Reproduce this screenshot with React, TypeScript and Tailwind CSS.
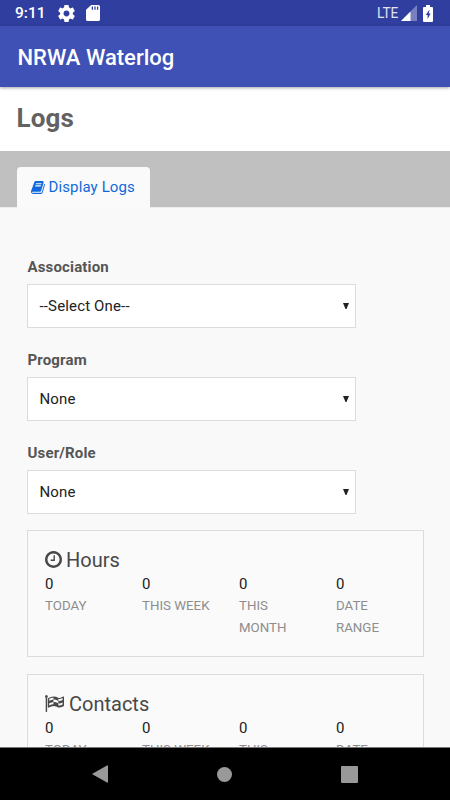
import type { ReactNode } from 'react'

interface IconProps {
  className?: string
}

interface SelectFieldProps {
  /** Label above the field */
  label: string

  /** Currently selected option */
  value: string
}

interface StatCardProps {
  title: string
  icon: ReactNode
}

const PERIODS = ['TODAY', 'THIS WEEK', 'THIS MONTH', 'DATE RANGE']

function BookIcon({ className }: IconProps) {
  return (
    <svg viewBox="0 0 1664 1792" fill="currentColor" className={className}>
      <path d="M1639 478q40 57 18 129l-275 906q-19 64-76.5 107.5t-122.5 43.5h-923q-77 0-148.5-53.5t-99.5-131.5q-24-67-2-127 0-4 3-27t4-37q1-8-3-21.5t-3-19.5q2-11 8-21t16.5-23.5 16.5-23.5q23-38 45-91.5t30-91.5q3-10 .5-30t-.5-28q3-11 17-28t17-23q21-36 42-92t25-90q1-9-2.5-32t.5-28q4-13 22-30.5t22-22.5q19-26 42.5-84.5t27.5-96.5q1-8-3-25.5t-2-26.5q2-8 9-18t18-23 17-21q8-12 16.5-30.5t15-35 16-36 19.5-32 26.5-23.5 36-11.5 47.5 5.5l-1 3q38-9 51-9h761q74 0 114 56t18 130l-274 906q-36 119-71.5 153.5t-128.5 34.5h-869q-27 0-38 15-11 16-1 43 24 70 144 70h923q29 0 56-15.5t35-41.5l300-987q7-22 5-57 38 15 59 43zm-1064 2q-4 13 2 22.5t20 9.5h608q13 0 25.5-9.5t16.5-22.5l21-64q4-13-2-22.5t-20-9.5h-608q-13 0-25.5 9.5t-16.5 22.5zm-83 256q-4 13 2 22.5t20 9.5h608q13 0 25.5-9.5t16.5-22.5l21-64q4-13-2-22.5t-20-9.5h-608q-13 0-25.5 9.5t-16.5 22.5z" />
    </svg>
  )
}

function ClockIcon({ className }: IconProps) {
  return (
    <svg viewBox="128 128 1536 1536" fill="currentColor" className={className}>
      <path d="M1024 544v448q0 14-9 23t-23 9h-320q-14 0-23-9t-9-23v-64q0-14 9-23t23-9h224v-352q0-14 9-23t23-9h64q14 0 23 9t9 23zm416 352q0-148-73-273t-198-198-273-73-273 73-198 198-73 273 73 273 198 198 273 73 273-73 198-198 73-273zm224 0q0 209-103 385.5t-279.5 279.5-385.5 103-385.5-103-279.5-279.5-103-385.5 103-385.5 279.5-279.5 385.5-103 385.5 103 279.5 279.5 103 385.5z" />
    </svg>
  )
}

function CheckeredFlagIcon({ className }: IconProps) {
  return (
    <svg viewBox="64 128 1728 1536" fill="currentColor" fillRule="evenodd" className={className}>
      {/* pole */}
      <path d="M320 256q0 35-17.5 64t-46.5 46v1266q0 14-9 23t-23 9h-64q-14 0-23-9t-9-23V366q-29-17-46.500-46T64 256q0-53 37.500-90.500T192 128t90.500 37.500T320 256z" />
      {/* cloth, with the light squares cut out */}
      <path d="M1792 320v763q0 39-35 57-10 5-17 9-218 116-369 116-88 0-158-35l-28-14q-64-33-99-48t-91-29-114-14q-102 0-235.500 44t-228.500 102q-15 9-33 9-16 0-32-8-32-19-32-56V474q0-35 31-55 35-21 78.500-42.500t114-52 152.500-49.500 155-19q112 0 209 31t209 86q38 19 89 19 122 0 310-112 22-12 31-17 31-16 62 2 31 20 31 55zM832 536V344q-181 16-384 117v185q205-96 384-110zM832 954V757q-172 8-384 126v189q215-111 384-118zM832 535q190-10 448 124v224q-250-140-448-126zM1280 470q149 45 384-75v184q-235 120-384 75zM1280 883q149 45 384-71v184q-235 116-384 75z" />
    </svg>
  )
}

function StatusBar() {
  return (
    <div className="flex h-[26px] shrink-0 items-center bg-[#303f9f] pl-[15px] pr-[17px] text-white">
      <span className="w-[43px] pt-px text-[15.5px] leading-none font-medium">9:11</span>
      <svg viewBox="2 2 20 20" fill="currentColor" className="h-[17px] w-[17px]">
        <path d="M19.43 12.98c.04-.32.07-.64.07-.98s-.03-.66-.07-.98l2.11-1.65c.19-.15.24-.42.12-.64l-2-3.46c-.12-.22-.39-.3-.61-.22l-2.49 1c-.52-.4-1.08-.73-1.69-.98l-.38-2.65C14.46 2.18 14.25 2 14 2h-4c-.25 0-.46.18-.49.42l-.38 2.65c-.61.25-1.17.59-1.69.98l-2.49-1c-.23-.09-.49 0-.61.22l-2 3.46c-.13.22-.07.49.12.64l2.11 1.65c-.04.32-.07.65-.07.98s.03.66.07.98l-2.11 1.65c-.19.15-.24.42-.12.64l2 3.46c.12.22.39.3.61.22l2.49-1c.52.4 1.08.73 1.69.98l.38 2.65c.03.24.24.42.49.42h4c.25 0 .46-.18.49-.42l.38-2.65c.61-.25 1.17-.59 1.69-.98l2.49 1c.23.09.49 0 .61-.22l2-3.46c.12-.22.07-.49-.12-.64l-2.11-1.65zM12 15.5c-1.93 0-3.5-1.57-3.5-3.5s1.57-3.5 3.5-3.5 3.5 1.57 3.5 3.5-1.57 3.5-3.5 3.5z" />
      </svg>
      <svg viewBox="4 2 16 20" fill="currentColor" className="ml-[11px] h-4 w-[14px]" preserveAspectRatio="none">
        <path d="M18 2h-8L4.02 8 4 20c0 1.1.9 2 2 2h12c1.100 0 2-.9 2-2V4c0-1.100-.9-2-2-2zm-6 6h-1.500V4H12v4zm3 0h-1.500V4H15v4zm3 0h-1.500V4H18v4z" />
      </svg>
      <span className="mr-[3px] ml-auto origin-right scale-x-[0.88] pt-px text-[15.5px] leading-none text-[#e0e2f2]">LTE</span>
      <svg viewBox="0 0 16 16" className="h-4 w-4">
        <path d="M0 16L16 0v16z" fill="#7781bf" />
        <path d="M0 16L9.5 6.5V16z" fill="white" />
      </svg>
      <svg viewBox="0 0 10 17" className="ml-[6px] h-[17px] w-[10px]">
        <path d="M3 0h4v2h2q1 0 1 1v13q0 1-1 1H1q-1 0-1-1V3q0-1 1-1h2z" fill="white" />
        <path d="M6.5 4.5L2.8 10h1.8v4L7.6 8.5H5.8z" fill="#303f9f" />
      </svg>
    </div>
  )
}

/** Native looking select with a plain down arrow */
function SelectField({ label, value }: SelectFieldProps) {
  return (
    <div className="h-[93px] w-[329px]">
      <div className="h-[26px] pl-[0.5px] text-[15px] leading-[18px] font-bold tracking-[0.15px] text-[#555]">
        {label}
      </div>
      <div className="flex h-11 items-center justify-between border border-[#dcdcdc] bg-white pr-[6px] pl-[11.5px] text-[15px] tracking-[0.15px] text-[#222]">
        <span>{value}</span>
        <svg viewBox="0 0 6 6" className="h-[6px] w-[6px]">
          <path d="M0 0h6L3.500 6h-1z" fill="#222" />
        </svg>
      </div>
    </div>
  )
}

function StatCard({ title, icon }: StatCardProps) {
  return (
    <div className="h-[127px] w-[397px] shrink-0 border border-[#dcdcdc] bg-[#fafafa] pt-[15px] pl-[17px]">
      <div className="flex h-[27px] items-center text-[20px] text-[#484848]">
        {icon}
        <span>{title}</span>
      </div>
      <div className="flex">
        {PERIODS.map((period) => (
          <div key={period} className="w-[97px] shrink-0 pr-5">
            <div className="text-[15px] leading-[22px] text-[#222]">0</div>
            <div className="text-[13.3px] leading-[22px] text-[#8d8d8d]">{period}</div>
          </div>
        ))}
      </div>
    </div>
  )
}

export default function App() {
  return (
    <div className="flex h-[800px] w-[450px] flex-col overflow-hidden bg-[#f9f9f9] font-['Roboto',sans-serif]">
      <StatusBar />
      <header className="z-10 flex h-[61px] shrink-0 items-center bg-[#3f51b5] pt-[2px] pl-[17.5px] text-[22px] font-medium text-white shadow-[0_1px_3px_rgba(0,0,0,0.35)]">
        NRWA Waterlog
      </header>
      <h1 className="flex h-16 shrink-0 items-center bg-white pb-[2px] pl-[16.5px] text-[26px] font-bold tracking-[0.1px] text-[#626262]">
        Logs
      </h1>
      <nav className="flex h-[57px] shrink-0 items-end border-b border-[#ececec] bg-[#c0c0c0] pl-[17px]">
        <div className="-mb-px flex h-[41px] w-[133px] items-center rounded-t bg-[#fafafa] pl-[13.5px] text-[15px] tracking-[0.12px] text-[#0f69dc]">
          <BookIcon className="mr-1 h-[15px] w-[14px]" />
          Display Logs
        </div>
      </nav>
      <main className="flex min-h-0 flex-1 flex-col overflow-hidden pt-[50px] pl-[27px]">
        <div className="h-[272px] shrink-0">
          <SelectField label="Association" value="--Select One--" />
          <SelectField label="Program" value="None" />
          <SelectField label="User/Role" value="None" />
        </div>
        <div className="flex flex-col gap-[17px]">
          <StatCard title="Hours" icon={<ClockIcon className="mr-[4px] h-[17px] w-[17px]" />} />
          <StatCard title="Contacts" icon={<CheckeredFlagIcon className="mr-[5px] h-[17px] w-[19px]" />} />
        </div>
      </main>
      <footer className="flex h-[53px] shrink-0 items-center border-t border-[#777] bg-black pl-[92px] text-[#999]">
        <svg viewBox="0 0 16 18" fill="currentColor" className="h-[18px] w-4">
          <path d="M15 .5Q16 0 16 1v16q0 1-1 .5L.8 9.500q-1-.5 0-1z" />
        </svg>
        <div className="ml-[109px] h-[15px] w-[15px] rounded-full bg-[#999]" />
        <div className="ml-[109px] h-[17px] w-[17px] rounded-[1px] bg-[#999]" />
      </footer>
    </div>
  )
}
